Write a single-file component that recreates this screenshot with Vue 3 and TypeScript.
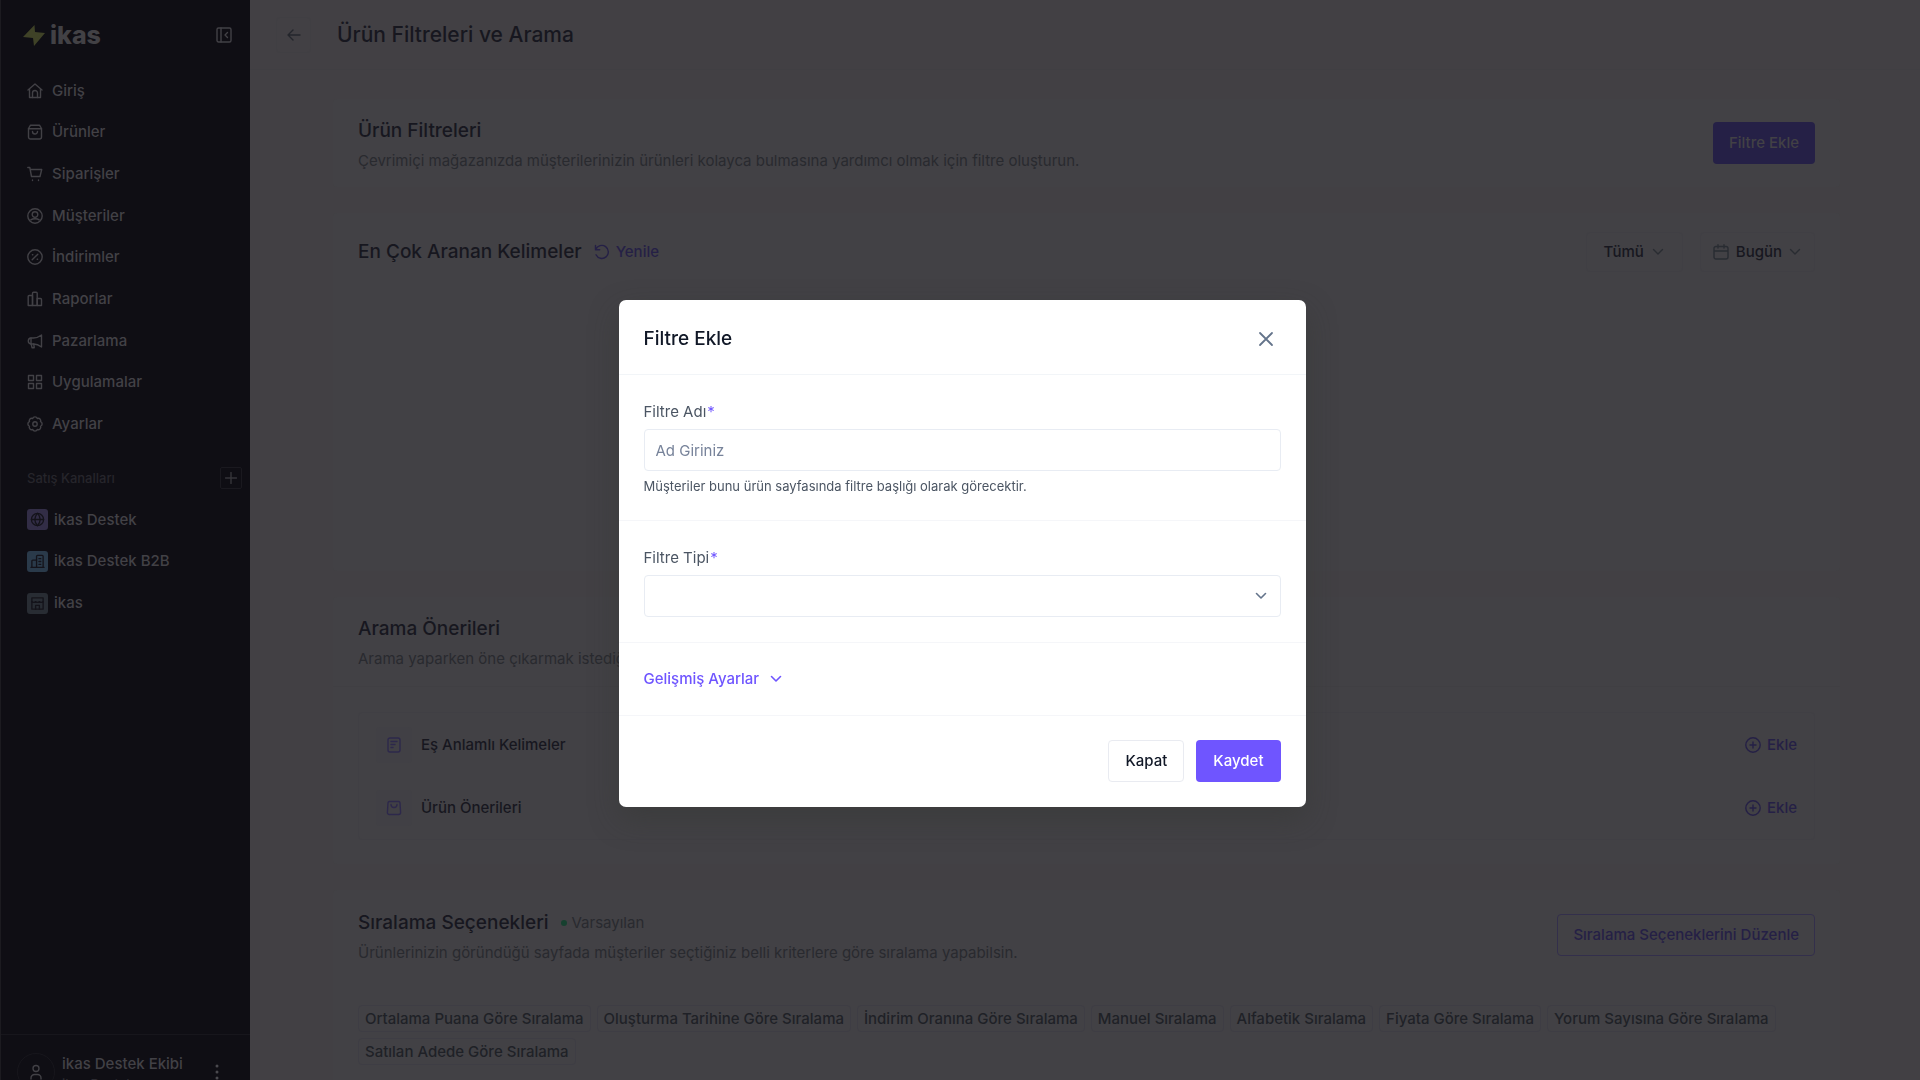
<script setup lang="ts">
import { ref } from 'vue'

interface NavItem { label: string; paths: string[] }
interface Channel { label: string; tone: string; paths: string[] }

const navItems: NavItem[] = [
  { label: 'Giriş', paths: ['M1 7 8 1l7 6', 'M2.500 6v8.500h11V6', 'M5.500 14.500V10a2.500 2.500 0 0 1 5 0v4.500'] },
  { label: 'Ürünler', paths: ['M3.500 1.200h9L14.500 4.500v8.500a2 2 0 0 1-2 2h-9a2 2 0 0 1-2-2V4.500z', 'M1.500 4.800h13', 'M5.500 7.500a2.500 2.500 0 0 0 5 0'] },
  { label: 'Siparişler', paths: ['M.8 1.500h2l1.700 9h8.500l1.700-7H3.300', 'M5.500 14v.6', 'M11.500 14v.6'] },
  { label: 'Müşteriler', paths: ['M15.200 8A7.200 7.200 0 1 1 .8 8a7.200 7.200 0 0 1 14.400 0', 'M10.800 6.500a2.800 2.800 0 1 1-5.600 0 2.800 2.800 0 0 1 5.600 0', 'M3.800 11.800c1.200-.8 2.600-1 4.200-1s3 .2 4.200 1'] },
  { label: 'İndirimler', paths: ['M15.200 8A7.200 7.200 0 1 1 .8 8a7.200 7.200 0 0 1 14.400 0', 'M10.800 5.200l-5.600 5.600', 'M5.400 5.700h.4', 'M10.200 10.300h.4'] },
  { label: 'Raporlar', paths: ['M1.200 14.500V5.500a1 1 0 0 1 1-1h3.300v10z', 'M5.500 14.500V2.200a1 1 0 0 1 1-1h2.700a1 1 0 0 1 1 1v12.300z', 'M10.200 7.500h3.300a1 1 0 0 1 1 1v6h-4.300z'] },
  { label: 'Pazarlama', paths: ['M14.500 2v12c-2.500-1.900-5-3-8-3H4a3 3 0 0 1-2.700-3A3 3 0 0 1 4 5h2.500c3 0 5.500-1.100 8-3z', 'M4.200 11l.8 3.700h2.200L6.800 11', 'M4 5v6'] },
  { label: 'Uygulamalar', paths: ['M1.500 1.500h5v5h-5z', 'M9.500 1.500h5v5h-5z', 'M1.500 9.500h5v5h-5z', 'M9.500 9.500h5v5h-5z'] },
  { label: 'Ayarlar', paths: ['M13.500 5.700a2.450 2.450 0 0 1 0 4.600 2.400 2.400 0 0 1-3.200 3.200 2.450 2.450 0 0 1-4.600 0 2.400 2.400 0 0 1-3.200-3.200 2.450 2.450 0 0 1 0-4.600 2.400 2.400 0 0 1 3.200-3.200 2.450 2.450 0 0 1 4.600 0 2.400 2.400 0 0 1 3.200 3.200z', 'M10.200 8a2.200 2.200 0 1 1-4.400 0 2.200 2.200 0 0 1 4.400 0'] },
]

const channels: Channel[] = [
  { label: 'ikas Destek', tone: 'violet', paths: ['M14.500 8a6.500 6.500 0 1 1-13 0 6.500 6.500 0 0 1 13 0', 'M1.500 8h13', 'M8 1.500c-3.800 3.800-3.800 9.200 0 13', 'M8 1.500c3.800 3.800 3.800 9.200 0 13'] },
  { label: 'ikas Destek B2B', tone: 'blue', paths: ['M7 14V2.500a1 1 0 0 1 1-1h5a1 1 0 0 1 1 1V14', 'M2 14V7.500a1 1 0 0 1 1-1h4', 'M1 14.200h14', 'M9.500 5h2', 'M9.500 8h2', 'M9.500 11h2'] },
  { label: 'ikas', tone: 'slate', paths: ['M2 2h12v12H2z', 'M2 6c1.500 1.200 2.500 1.200 4 0 1.500 1.200 2.500 1.200 4 0 1.500 1.200 2.500 1.200 4 0', 'M6 14V10h4v4'] },
]

const suggestions = [
  { label: 'Eş Anlamlı Kelimeler', paths: ['M4 1h8a2 2 0 0 1 2 2v10a2 2 0 0 1-2 2H4a2 2 0 0 1-2-2V3a2 2 0 0 1 2-2z', 'M5 4.500h6', 'M5 7.500h4', 'M5 10.500h2'] },
  { label: 'Ürün Önerileri', paths: ['M3.500 1.500h9a1.500 1.500 0 0 1 1.500 1.400l.6 9.600a2 2 0 0 1-2 2H3.400a2 2 0 0 1-2-2L2 2.900a1.500 1.500 0 0 1 1.500-1.400z', 'M5 4.500a3 3 0 0 0 6 0'] },
]

const sortOptions: string[] = [
  'Ortalama Puana Göre Sıralama',
  'Oluşturma Tarihine Göre Sıralama',
  'İndirim Oranına Göre Sıralama',
  'Manuel Sıralama',
  'Alfabetik Sıralama',
  'Fiyata Göre Sıralama',
  'Yorum Sayısına Göre Sıralama',
  'Satılan Adede Göre Sıralama',
]

const filterName = ref('')
const filterType = ref('')
</script>

<template>
  <div class="app">
    <aside class="sidebar">
      <div class="brand">
        <svg class="bolt" viewBox="0 0 22 21" aria-hidden="true"><path d="M11.500 0 0 12l10 1 1 8L22 8l-10-1z" /></svg>
        <span class="wordmark">ikas</span>
        <button class="icon-button collapse" type="button" aria-label="Menüyü daralt">
          <svg class="icon" viewBox="0 0 16 16"><path d="M2.500 1h11a1.500 1.500 0 0 1 1.500 1.500v11a1.500 1.500 0 0 1-1.500 1.500h-11A1.500 1.500 0 0 1 1 13.500v-11A1.500 1.500 0 0 1 2.500 1z" /><path d="M5 1v14M11.500 5.500 9 8l2.500 2.500" /></svg>
        </button>
      </div>

      <nav class="nav">
        <a v-for="item in navItems" :key="item.label" class="nav-link" href="#">
          <svg class="icon" viewBox="0 0 16 16" aria-hidden="true"><path v-for="d in item.paths" :key="d" :d="d" /></svg>
          {{ item.label }}
        </a>
      </nav>

      <div class="channel-head">
        <span>Satış Kanalları</span>
        <button class="add-channel" type="button" aria-label="Kanal ekle">
          <svg class="icon small" viewBox="0 0 12 12"><path d="M6 .5v11M.5 6h11" /></svg>
        </button>
      </div>
      <nav class="channels">
        <a v-for="channel in channels" :key="channel.label" class="channel" href="#">
          <span class="channel-icon" :class="channel.tone">
            <svg class="icon" viewBox="0 0 16 16" aria-hidden="true"><path v-for="d in channel.paths" :key="d" :d="d" /></svg>
          </span>
          {{ channel.label }}
        </a>
      </nav>

      <div class="account">
        <span class="avatar">
          <svg class="icon" viewBox="0 0 16 16" aria-hidden="true"><path d="M11 4.500a3 3 0 1 1-6 0 3 3 0 0 1 6 0M3 15v-1a3.500 3.500 0 0 1 3.500-3.500h3A3.500 3.500 0 0 1 13 14v1" /></svg>
        </span>
        <span class="account-text">
          <span class="account-name">ikas Destek Ekibi</span>
          <span class="account-store">ikas Destek</span>
        </span>
        <button class="icon-button more" type="button" aria-label="Hesap menüsü">
          <svg viewBox="0 0 4 16"><circle cx="2" cy="2" r="1.500" /><circle cx="2" cy="8" r="1.500" /><circle cx="2" cy="14" r="1.500" /></svg>
        </button>
      </div>
    </aside>

    <div class="page">
      <header class="topbar">
        <button class="back" type="button" aria-label="Geri">
          <svg class="icon" viewBox="0 0 16 16"><path d="M14 8H2M7 3 2 8l5 5" /></svg>
        </button>
        <h1>Ürün Filtreleri ve Arama</h1>
      </header>

      <main class="content">
        <section class="card">
          <div class="card-head">
            <div class="intro">
              <h2>Ürün Filtreleri</h2>
              <p>Çevrimiçi mağazanızda müşterilerinizin ürünleri kolayca bulmasına yardımcı olmak için filtre oluşturun.</p>
            </div>
            <button class="button solid" type="button">Filtre Ekle</button>
          </div>
        </section>

        <section class="card searches">
          <div class="card-head compact">
            <div class="title-row">
              <h2>En Çok Aranan Kelimeler</h2>
              <button class="text-button" type="button">
                <svg class="icon" viewBox="0 0 16 16" aria-hidden="true"><path d="M1.500 1.500v4.200h4.200M1.800 5.500A6.500 6.500 0 1 1 2 10.800" /></svg>
                Yenile
              </button>
            </div>
            <div class="pickers">
              <button class="picker all" type="button">
                Tümü
                <svg class="icon chevron" viewBox="0 0 12 12" aria-hidden="true"><path d="M1.500 3.500 6 8l4.500-4.500" /></svg>
              </button>
              <button class="picker date" type="button">
                <svg class="icon" viewBox="0 0 16 16" aria-hidden="true"><path d="M3 2.500h10a2 2 0 0 1 2 2V13a2 2 0 0 1-2 2H3a2 2 0 0 1-2-2V4.500a2 2 0 0 1 2-2zM1 7h14M5 .8V4M11 .8V4" /></svg>
                Bugün
                <svg class="icon chevron" viewBox="0 0 12 12" aria-hidden="true"><path d="M1.500 3.500 6 8l4.500-4.500" /></svg>
              </button>
            </div>
          </div>
        </section>

        <section class="card">
          <div class="card-head tall ruled">
            <div class="intro">
              <h2>Arama Önerileri</h2>
              <p>Arama yaparken öne çıkarmak istediğiniz önerileri düzenleyin.</p>
            </div>
          </div>
          <ul class="suggestions">
            <li v-for="item in suggestions" :key="item.label">
              <span class="suggestion-icon">
                <svg class="icon" viewBox="0 0 16 16" aria-hidden="true"><path v-for="d in item.paths" :key="d" :d="d" /></svg>
              </span>
              <span class="suggestion-name">{{ item.label }}</span>
              <button class="text-button" type="button">
                <svg class="icon" viewBox="0 0 16 16" aria-hidden="true"><path d="M15.200 8A7.200 7.200 0 1 1 .8 8a7.200 7.200 0 0 1 14.400 0M8 5v6M5 8h6" /></svg>
                Ekle
              </button>
            </li>
          </ul>
        </section>

        <section class="card">
          <div class="card-head tall">
            <div class="intro">
              <div class="title-row">
                <h2>Sıralama Seçenekleri</h2>
                <span class="status">Varsayılan</span>
              </div>
              <p>Ürünlerinizin göründüğü sayfada müşteriler seçtiğiniz belli kriterlere göre sıralama yapabilsin.</p>
            </div>
            <button class="button outline" type="button">Sıralama Seçeneklerini Düzenle</button>
          </div>
          <ul class="tags">
            <li v-for="option in sortOptions" :key="option">{{ option }}</li>
          </ul>
        </section>
      </main>
    </div>

    <div class="overlay">
      <form class="modal" role="dialog" aria-labelledby="modal-title" @submit.prevent>
        <header class="modal-head">
          <h2 id="modal-title">Filtre Ekle</h2>
          <button class="icon-button close" type="button" aria-label="Pencereyi kapat">
            <svg class="icon" viewBox="0 0 16 16"><path d="M2 2l12 12M14 2 2 14" /></svg>
          </button>
        </header>
        <div class="field-block name-block">
          <label for="filter-name">Filtre Adı<span class="required">*</span></label>
          <input id="filter-name" v-model="filterName" type="text" placeholder="Ad Giriniz" />
          <small>Müşteriler bunu ürün sayfasında filtre başlığı olarak görecektir.</small>
        </div>
        <div class="field-block type-block">
          <label for="filter-type">Filtre Tipi<span class="required">*</span></label>
          <div class="select-wrap">
            <select id="filter-type" v-model="filterType">
              <option value=""></option>
            </select>
            <svg class="icon chevron" viewBox="0 0 12 12" aria-hidden="true"><path d="M1.500 3.500 6 8l4.500-4.500" /></svg>
          </div>
        </div>
        <div class="advanced">
          <button type="button">
            Gelişmiş Ayarlar
            <svg class="icon chevron" viewBox="0 0 12 12" aria-hidden="true"><path d="M1.500 3.500 6 8l4.500-4.500" /></svg>
          </button>
        </div>
        <footer class="modal-foot">
          <button class="button cancel" type="button">Kapat</button>
          <button class="button save" type="submit">Kaydet</button>
        </footer>
      </form>
    </div>
  </div>
</template>

<style>
body { margin: 0; background: #424044; }
</style>

<style scoped>
* { box-sizing: border-box; }

.app {
  display: flex;
  height: 100vh;
  overflow: hidden;
  font-family: Inter, "Noto Sans", sans-serif;
  font-size: 15px;
  line-height: 24px;
  color: #17171f;
  background: #424044;
}

h1, h2, p, ul { margin: 0; padding: 0; font-weight: 500; }
ul { list-style: none; }
a { color: inherit; text-decoration: none; }
button, input, select { font: inherit; }
button { cursor: pointer; }

.icon {
  flex: none;
  width: 16px;
  height: 16px;
  fill: none;
  stroke: currentColor;
  stroke-width: 1.4;
  stroke-linecap: round;
  stroke-linejoin: round;
}
.icon.small, .icon.chevron { width: 12px; height: 12px; }
.icon-button { display: flex; padding: 0; border: 0; background: none; color: inherit; }

/* Sidebar */
.sidebar {
  display: flex;
  flex: none;
  flex-direction: column;
  width: 250px;
  background: #0f0e14;
  border-left: 1px solid #1c1b20;
  color: #424146;
  font-weight: 500;
}
.brand { display: flex; align-items: center; height: 70px; padding: 0 18px 0 22px; }
.bolt { width: 22px; height: 21px; fill: #3f4227; }
.wordmark { margin-left: 5px; font-size: 25px; font-weight: 800; line-height: 32px; color: #424145; }
.collapse { margin-left: auto; }
.nav { display: grid; grid-auto-rows: 1fr; height: 375px; }
.nav-link { display: flex; align-items: center; gap: 9px; padding-left: 26px; }
.channel-head {
  display: flex;
  align-items: center;
  justify-content: space-between;
  height: 42px;
  margin-top: 12px;
  padding: 0 8px 0 26px;
  font-size: 13px;
  color: #26252b;
}
.add-channel {
  display: grid;
  place-items: center;
  width: 22px;
  height: 22px;
  padding: 0;
  border: 1px solid #1a191f;
  border-radius: 2px;
  background: none;
  color: #36353a;
}
.channels { display: grid; grid-auto-rows: 1fr; height: 125px; }
.channel { display: flex; align-items: center; gap: 6px; padding-left: 26px; }
.channel-icon { display: grid; place-items: center; width: 21px; height: 21px; border-radius: 3px; color: #14131a; }
.channel-icon .icon { width: 15px; height: 15px; }
.violet { background: #322d46; }
.blue { background: #2a3a4a; }
.slate { background: #282c33; }
.account {
  display: flex;
  align-items: flex-start;
  height: 46px;
  margin-top: auto;
  padding: 18px 31px 0 16px;
  border-top: 1px solid #17161c;
  overflow: hidden;
}
.avatar {
  display: grid;
  flex: none;
  place-items: center;
  width: 38px;
  height: 38px;
  border: 1px solid #17161c;
  border-radius: 50%;
}
.account-text { display: grid; margin-left: 7px; line-height: 22px; }
.account-store { font-size: 13px; line-height: 18px; color: #2c2b31; }
.more { margin: 11px 0 0 auto; }
.more svg { width: 4px; height: 16px; fill: #4a494e; }

/* Page */
.page { flex: 1; min-width: 0; }
.topbar { display: flex; align-items: center; height: 70px; padding-left: 26px; border-bottom: 1px solid #403f43; }
.back {
  display: grid;
  place-items: center;
  width: 35px;
  height: 36px;
  padding: 0;
  border: 1px solid #403f43;
  border-radius: 4px;
  background: none;
  color: #24262c;
}
h1 { margin-left: 26px; font-size: 21px; line-height: 30px; }
h2 { font-size: 19px; line-height: 28px; }
.content { display: grid; gap: 26px; padding: 29px 80px 0 83px; }
.card { padding: 0 25px; background: #424145; border-radius: 4px; }
.card-head { display: flex; align-items: center; justify-content: space-between; min-height: 88px; }
.intro { padding-top: 3px; }
.intro p { margin-top: 4px; font-weight: 400; line-height: 24px; color: #292a2f; }
.card-head.compact { min-height: 78px; }
.card-head.tall { min-height: 90px; }
.card-head.ruled { margin: 0 -25px; padding: 0 25px; border-bottom: 1px solid #403f43; }
.searches { min-height: 358px; }
.title-row { display: flex; align-items: center; gap: 12px; }
.button {
  height: 42px;
  padding: 0 15px;
  border: 1px solid transparent;
  border-radius: 4px;
  font-weight: 500;
  white-space: nowrap;
}
.solid { background: #252046; color: #424145; }
.outline { border-color: #332f4b; background: none; color: #252046; }
.text-button {
  display: flex;
  align-items: center;
  gap: 6px;
  padding: 0;
  border: 0;
  background: none;
  color: #252046;
  font-weight: 500;
}
.pickers { display: flex; gap: 17px; }
.picker {
  display: flex;
  align-items: center;
  height: 40px;
  border: 1px solid #403f44;
  border-radius: 4px;
  background: none;
  color: #17171f;
  font-weight: 500;
}
.picker .icon { color: #292c32; }
.all { gap: 8px; padding: 0 18px 0 16px; }
.date { gap: 7px; padding: 0 13px 0 12px; }
.suggestions { margin: 25px 0 24px; border: 1px solid #403f44; border-radius: 4px; }
.suggestions li { display: flex; align-items: center; height: 63px; padding: 0 17px; }
.suggestion-icon {
  display: grid;
  place-items: center;
  width: 36px;
  height: 36px;
  border-radius: 4px;
  background: #414045;
  color: #2d284b;
}
.suggestion-name { margin-left: 9px; font-weight: 500; }
.suggestions .text-button { margin-left: auto; }
.status { display: flex; align-items: center; gap: 5px; color: #292a2f; }
.status::before { width: 6px; height: 6px; border-radius: 50%; background: #16402f; content: ""; }
.tags { display: flex; flex-wrap: wrap; gap: 6px; padding: 25px 0; }
.tags li { padding: 0 6px; border: 1px solid #3e3d44; border-radius: 4px; line-height: 25px; color: #1f2127; }

/* Dialog */
.overlay {
  position: fixed;
  inset: 0;
  display: flex;
  align-items: flex-start;
  justify-content: center;
  padding: 300px 0 0 4px;
}
.modal {
  width: 687px;
  border-radius: 7px;
  background: #fff;
  box-shadow: 0 12px 30px rgba(50, 52, 48, 0.4);
}
.modal-head {
  display: flex;
  align-items: center;
  justify-content: space-between;
  height: 75px;
  padding: 4px 32px 0 25px;
  border-bottom: 1px solid #f2f5f8;
  color: #111827;
}
.modal-head h2 { font-size: 19px; }
.close { color: #64748b; }
.close .icon { stroke-width: 1.8; }
.field-block { padding: 25px 25px 0; border-bottom: 1px solid #f5f6f9; }
.field-block label { display: flex; align-items: center; height: 24px; margin-bottom: 5px; color: #4b5563; }
.required { margin-left: 1px; color: #6f55ff; }
.name-block { height: 146px; }
.type-block { height: 122px; }
input, select {
  display: block;
  width: 100%;
  height: 42px;
  padding: 0 11px;
  border: 1px solid #e8ecf3;
  border-radius: 4px;
  outline: 0;
  background: #fff;
  color: #111827;
}
input::placeholder { color: #77839a; opacity: 1; }
small { display: block; margin-top: 4px; font-size: 13px; line-height: 22px; color: #4b5563; }
.select-wrap { position: relative; }
select { appearance: none; }
.select-wrap .chevron { position: absolute; top: 15px; right: 14px; color: #64748b; stroke-width: 1.6; pointer-events: none; }
.advanced { display: flex; align-items: center; height: 73px; padding: 0 25px; border-bottom: 1px solid #f5f6f9; }
.advanced button { display: flex; align-items: center; gap: 11px; padding: 0; border: 0; background: none; color: #6f55ff; font-weight: 500; }
.advanced .chevron { stroke-width: 1.6; }
.modal-foot { display: flex; justify-content: flex-end; gap: 12px; padding: 24px 25px 25px; }
.modal-foot .button { padding: 0 16px; }
.cancel { border-color: #e9ebf1; background: #fff; color: #111827; }
.save { background: #6f55ff; color: #fff; }
</style>
